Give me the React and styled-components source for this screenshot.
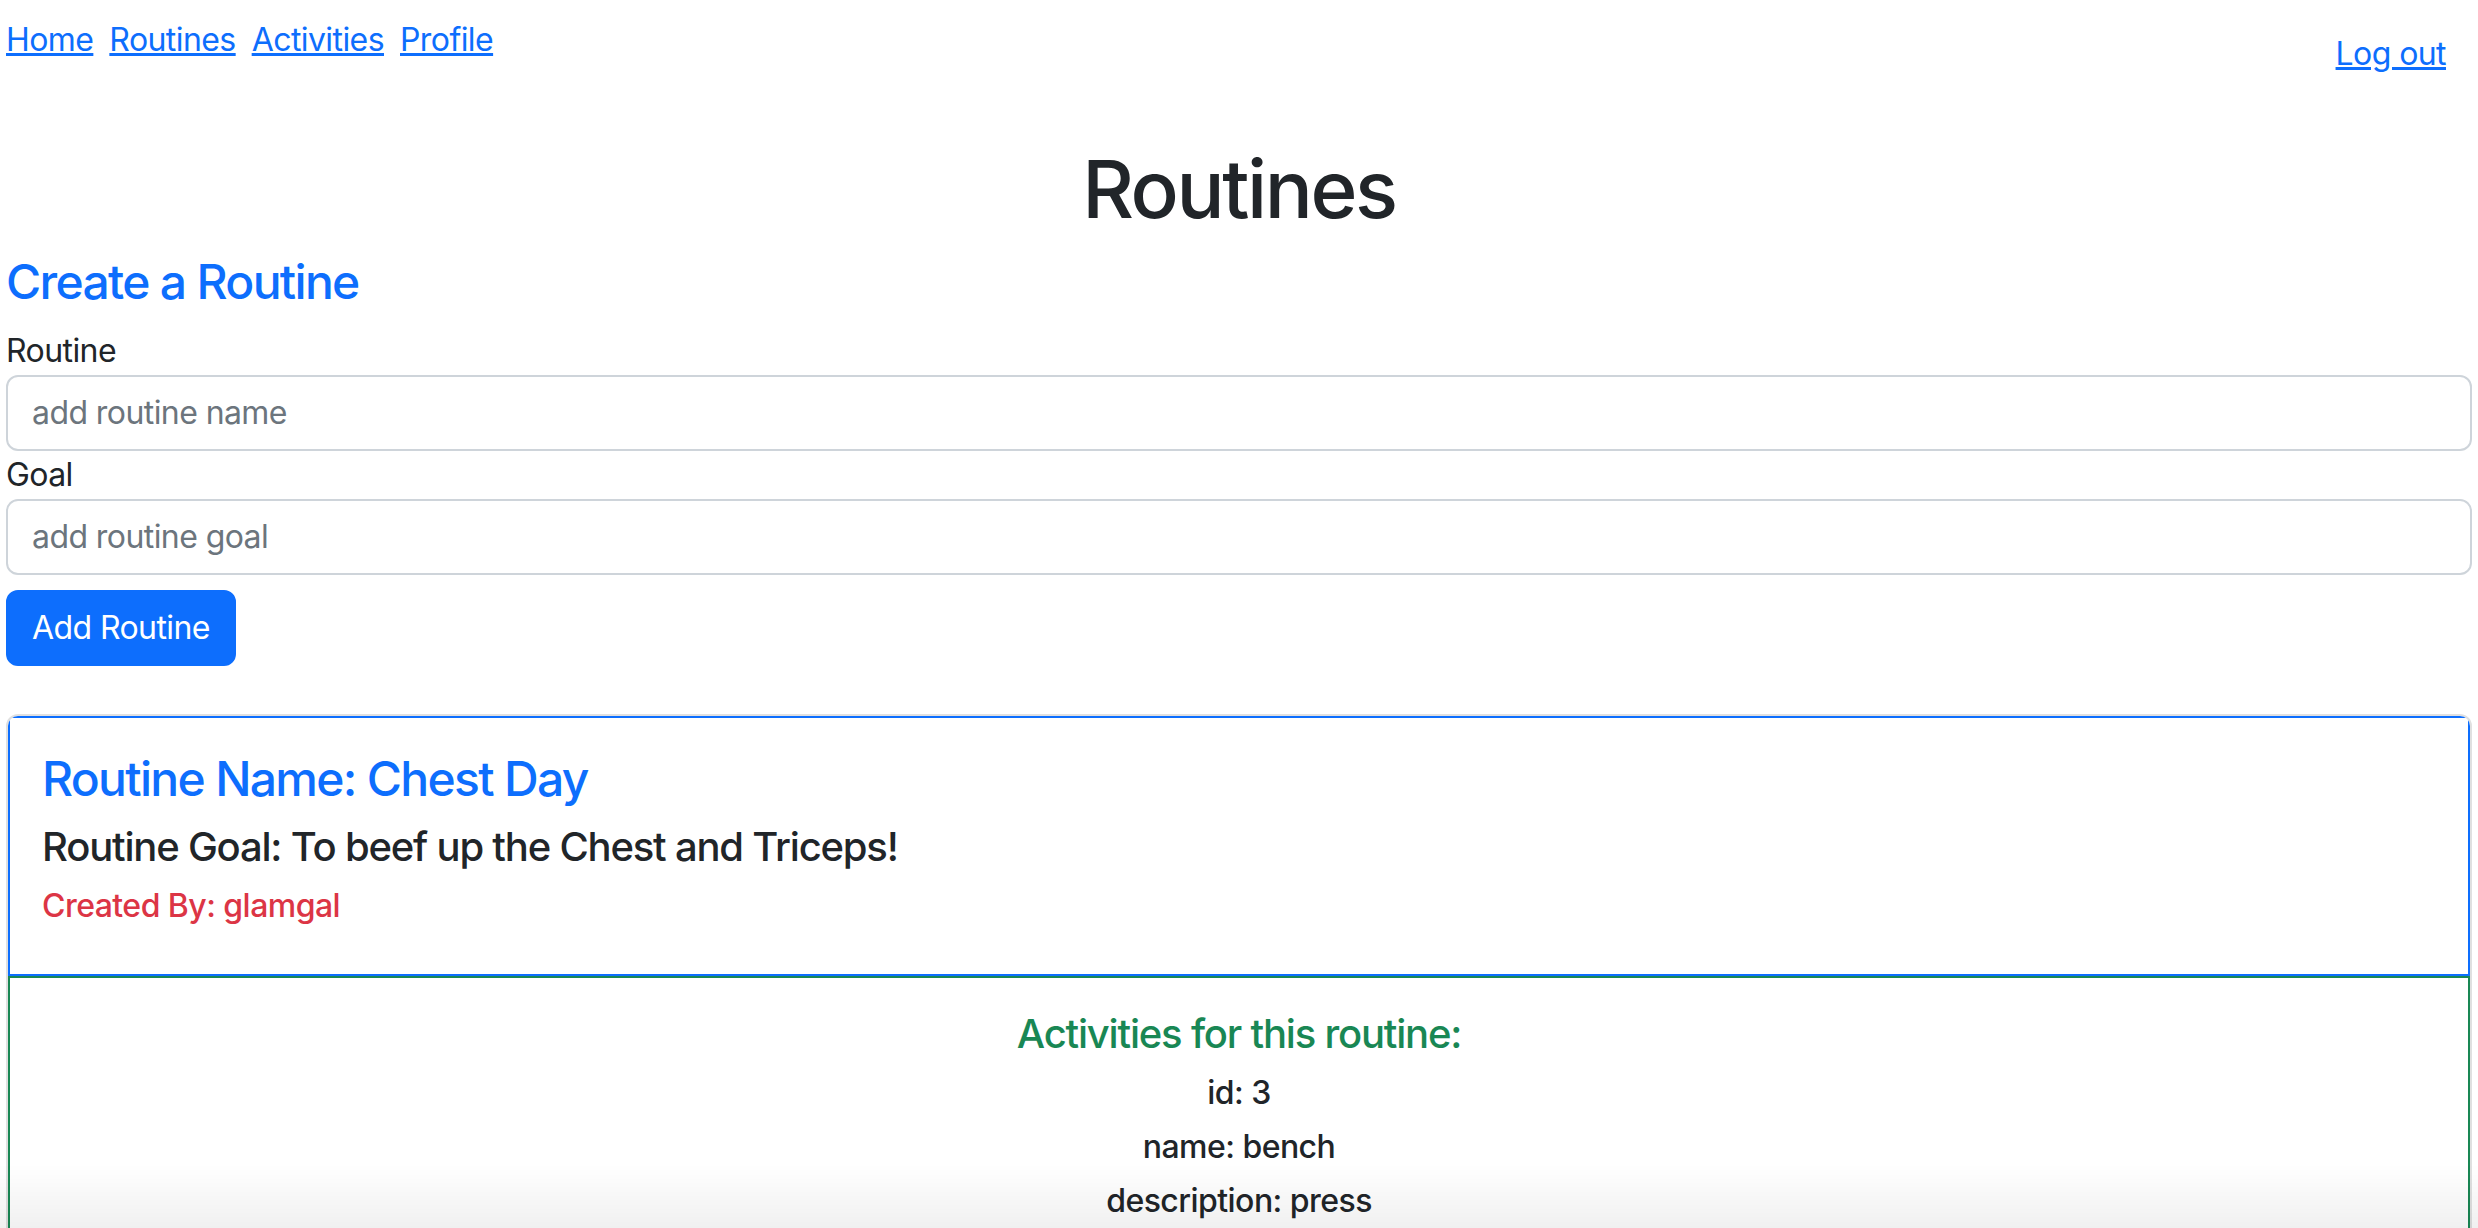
import React from 'react';
import styled, { createGlobalStyle } from 'styled-components';

const GlobalStyle = createGlobalStyle`
  * { box-sizing: border-box; }
  body {
    margin: 0;
    background: #fff;
    color: #212529;
    font-family: Inter, "Noto Sans", "Liberation Sans", sans-serif;
    font-size: 32px;
    line-height: 1.5;
    letter-spacing: -0.018em;
  }
`;

const Page = styled.div`
  padding: 16px 6px 0 6px;
`;

const TopBar = styled.nav`
  display: flex;
  justify-content: space-between;
  align-items: flex-start;
`;

const Links = styled.div`
  display: flex;
  gap: 16px;
`;

const NavLink = styled.a`
  color: #0d6efd;
  text-decoration: underline;
  font-size: 32px;
  line-height: 48px;
  cursor: pointer;
`;

const LogOut = styled.button`
  background: none;
  border: 2px solid transparent;
  padding: 12px 24px;
  font: inherit;
  font-size: 32px;
  line-height: 48px;
  letter-spacing: inherit;
  color: #0d6efd;
  text-decoration: underline;
  cursor: pointer;
`;

const Title = styled.h1`
  margin: 49px 0 16px;
  font-size: 80px;
  font-weight: 500;
  line-height: 1.2;
  letter-spacing: -0.03em;
  text-align: center;
`;

const Heading = styled.h4`
  margin: 0 0 16px;
  font-size: ${p => p.size || 48}px;
  font-weight: 500;
  line-height: 1.2;
  letter-spacing: ${p => (p.size === 32 ? '-0.017em' : p.size === 40 ? '-0.03em' : '-0.035em')};
  color: ${p => p.color || '#212529'};
`;

const Form = styled.form`
  display: flex;
  flex-direction: column;
  align-items: flex-start;
`;

const Label = styled.label`
  font-size: 32px;
  line-height: 48px;
`;

const Input = styled.input`
  width: 100%;
  height: 76px;
  padding: 12px 24px;
  font: inherit;
  font-size: 32px;
  line-height: 48px;
  letter-spacing: inherit;
  color: #212529;
  border: 2px solid #ced4da;
  border-radius: 12px;
  outline: none;
  &::placeholder { color: #6c757d; }
`;

const Button = styled.button`
  margin-top: 15px;
  padding: 12px 24px;
  font: inherit;
  font-size: 32px;
  line-height: 48px;
  letter-spacing: inherit;
  color: #fff;
  background: #0d6efd;
  border: 2px solid #0d6efd;
  border-radius: 12px;
  cursor: pointer;
`;

const Card = styled.div`
  margin-top: 48px;
  border: 2px solid rgba(0, 0, 0, 0.12);
  border-radius: 12px;
  overflow: hidden;
`;

const Section = styled.div`
  border: 2px solid ${p => p.border};
  padding: 32px;
  text-align: ${p => (p.center ? 'center' : 'left')};
`;

const BottomFade = styled.div`
  position: fixed;
  left: 0;
  right: 0;
  bottom: 0;
  height: 64px;
  pointer-events: none;
  background: linear-gradient(rgba(0, 0, 0, 0), rgba(0, 0, 0, 0.06));
`;

const activity = { id: 3, name: 'bench', description: 'press' };

export default function App() {
  return (
    <>
      <GlobalStyle />
      <Page>
        <TopBar>
          <Links>
            <NavLink>Home</NavLink>
            <NavLink>Routines</NavLink>
            <NavLink>Activities</NavLink>
            <NavLink>Profile</NavLink>
          </Links>
          <LogOut type="button">Log out</LogOut>
        </TopBar>

        <Title>Routines</Title>

        <Heading color="#0d6efd">Create a Routine</Heading>
        <Form onSubmit={e => e.preventDefault()}>
          <Label>Routine</Label>
          <Input placeholder="add routine name" />
          <Label>Goal</Label>
          <Input placeholder="add routine goal" />
          <Button type="submit">Add Routine</Button>
        </Form>

        <Card>
          <Section border="#0d6efd">
            <Heading color="#0d6efd">Routine Name: Chest Day</Heading>
            <Heading as="h5" size={40}>Routine Goal: To beef up the Chest and Triceps!</Heading>
            <Heading as="h6" size={32} color="#dc3545">Created By: glamgal</Heading>
          </Section>
          <Section border="#198754" center>
            <Heading as="h5" size={40} color="#198754">Activities for this routine:</Heading>
            <Heading as="h6" size={32}>id: {activity.id}</Heading>
            <Heading as="h6" size={32}>name: {activity.name}</Heading>
            <Heading as="h6" size={32}>description: {activity.description}</Heading>
          </Section>
        </Card>
      </Page>
      <BottomFade />
    </>
  );
}
